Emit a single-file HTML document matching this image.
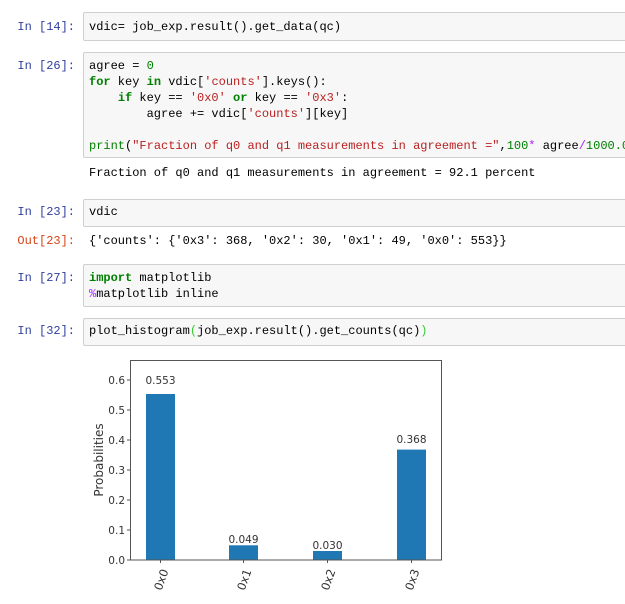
<!DOCTYPE html>
<html><head><meta charset="utf-8"><style>
html,body{margin:0;padding:0;background:#fff;width:625px;height:604px;overflow:hidden;position:relative}
.p{position:absolute;left:0;width:75px;text-align:right;font:12px/16px "Liberation Mono",monospace;color:#303f9f}
.o{color:#d84315}
.box{position:absolute;left:83px;width:560px;background:#f7f7f7;border:1px solid #cfcfcf;border-radius:2px}
.t{position:absolute;left:89px;font:12px/16px "Liberation Mono",monospace;color:#000;white-space:pre}
.k{color:#008000;font-weight:bold}
.s{color:#ba2121}
.n{color:#008000}
.op{color:#aa22ff}
.m{color:#aa22ff}
.pr{color:#008000}
</style></head><body>
<div class="p" style="top:19px">In&nbsp;[14]:</div>
<div class="box" style="top:12px;height:27px"></div>
<div class="t" style="top:19px">vdic= job_exp.result().get_data(qc)</div>

<div class="p" style="top:58px">In&nbsp;[26]:</div>
<div class="box" style="top:52px;height:104px"></div>
<div class="t" style="top:58px">agree = <span class="n">0</span>
<span class="k">for</span> key <span class="k">in</span> vdic[<span class="s">'counts'</span>].keys():
    <span class="k">if</span> key == <span class="s">'0x0'</span> <span class="k">or</span> key == <span class="s">'0x3'</span>:
        agree += vdic[<span class="s">'counts'</span>][key]

<span class="pr">print</span>(<span class="s">"Fraction of q0 and q1 measurements in agreement ="</span>,<span class="n">100</span><span class="op">*</span> agree<span class="op">/</span><span class="n">1000.0</span>,</div>
<div class="t" style="top:165px">Fraction of q0 and q1 measurements in agreement = 92.1 percent</div>

<div class="p" style="top:204px">In&nbsp;[23]:</div>
<div class="box" style="top:199px;height:26px"></div>
<div class="t" style="top:204px">vdic</div>
<div class="p o" style="top:233px">Out[23]:</div>
<div class="t" style="top:233px">{'counts': {'0x3': 368, '0x2': 30, '0x1': 49, '0x0': 553}}</div>

<div class="p" style="top:270px">In&nbsp;[27]:</div>
<div class="box" style="top:264px;height:41px"></div>
<div class="t" style="top:270px"><span class="k">import</span> matplotlib
<span class="m">%</span>matplotlib inline</div>

<div class="p" style="top:323px">In&nbsp;[32]:</div>
<div class="box" style="top:318px;height:26px"></div>
<div class="t" style="top:323px">plot_histogram<span style="color:#3c3">(</span>job_exp.result().get_counts(qc)<span style="color:#3c3">)</span></div>

<svg style="position:absolute;left:0;top:0" width="625" height="604" font-family="DejaVu Sans, Liberation Sans, sans-serif" font-size="10.5" fill="#333">
<g fill="#1f77b4">
<rect x="146" y="394" width="29" height="166"/>
<rect x="229" y="545.3" width="29" height="14.7"/>
<rect x="313" y="551" width="29" height="9"/>
<rect x="397" y="449.6" width="29" height="110.4"/>
</g>
<rect x="130.5" y="360.5" width="311" height="199.5" fill="none" stroke="#555" stroke-width="1"/>
<g stroke="#555">
<line x1="127" y1="560" x2="130" y2="560"/><line x1="127" y1="530" x2="130" y2="530"/>
<line x1="127" y1="500" x2="130" y2="500"/><line x1="127" y1="470" x2="130" y2="470"/>
<line x1="127" y1="440" x2="130" y2="440"/><line x1="127" y1="410" x2="130" y2="410"/>
<line x1="127" y1="380" x2="130" y2="380"/>
<line x1="160.5" y1="560" x2="160.5" y2="563"/><line x1="243.5" y1="560" x2="243.5" y2="563"/>
<line x1="327.5" y1="560" x2="327.5" y2="563"/><line x1="411.5" y1="560" x2="411.5" y2="563"/>
</g>
<g text-anchor="end">
<text x="125" y="564">0.0</text><text x="125" y="534">0.1</text><text x="125" y="504">0.2</text>
<text x="125" y="474">0.3</text><text x="125" y="444">0.4</text><text x="125" y="414">0.5</text>
<text x="125" y="384">0.6</text>
</g>
<g text-anchor="middle">
<text x="160.5" y="384">0.553</text><text x="243.5" y="543">0.049</text>
<text x="327.5" y="549">0.030</text><text x="411.5" y="443">0.368</text>
</g>
<text x="0" y="0" font-size="12" text-anchor="middle" transform="translate(103,460) rotate(-90)">Probabilities</text>
<g text-anchor="middle" font-size="11.5">
<text transform="translate(165,581) rotate(-70)">0x0</text>
<text transform="translate(248,581) rotate(-70)">0x1</text>
<text transform="translate(332,581) rotate(-70)">0x2</text>
<text transform="translate(416,581) rotate(-70)">0x3</text>
</g>
</svg>
</body></html>
